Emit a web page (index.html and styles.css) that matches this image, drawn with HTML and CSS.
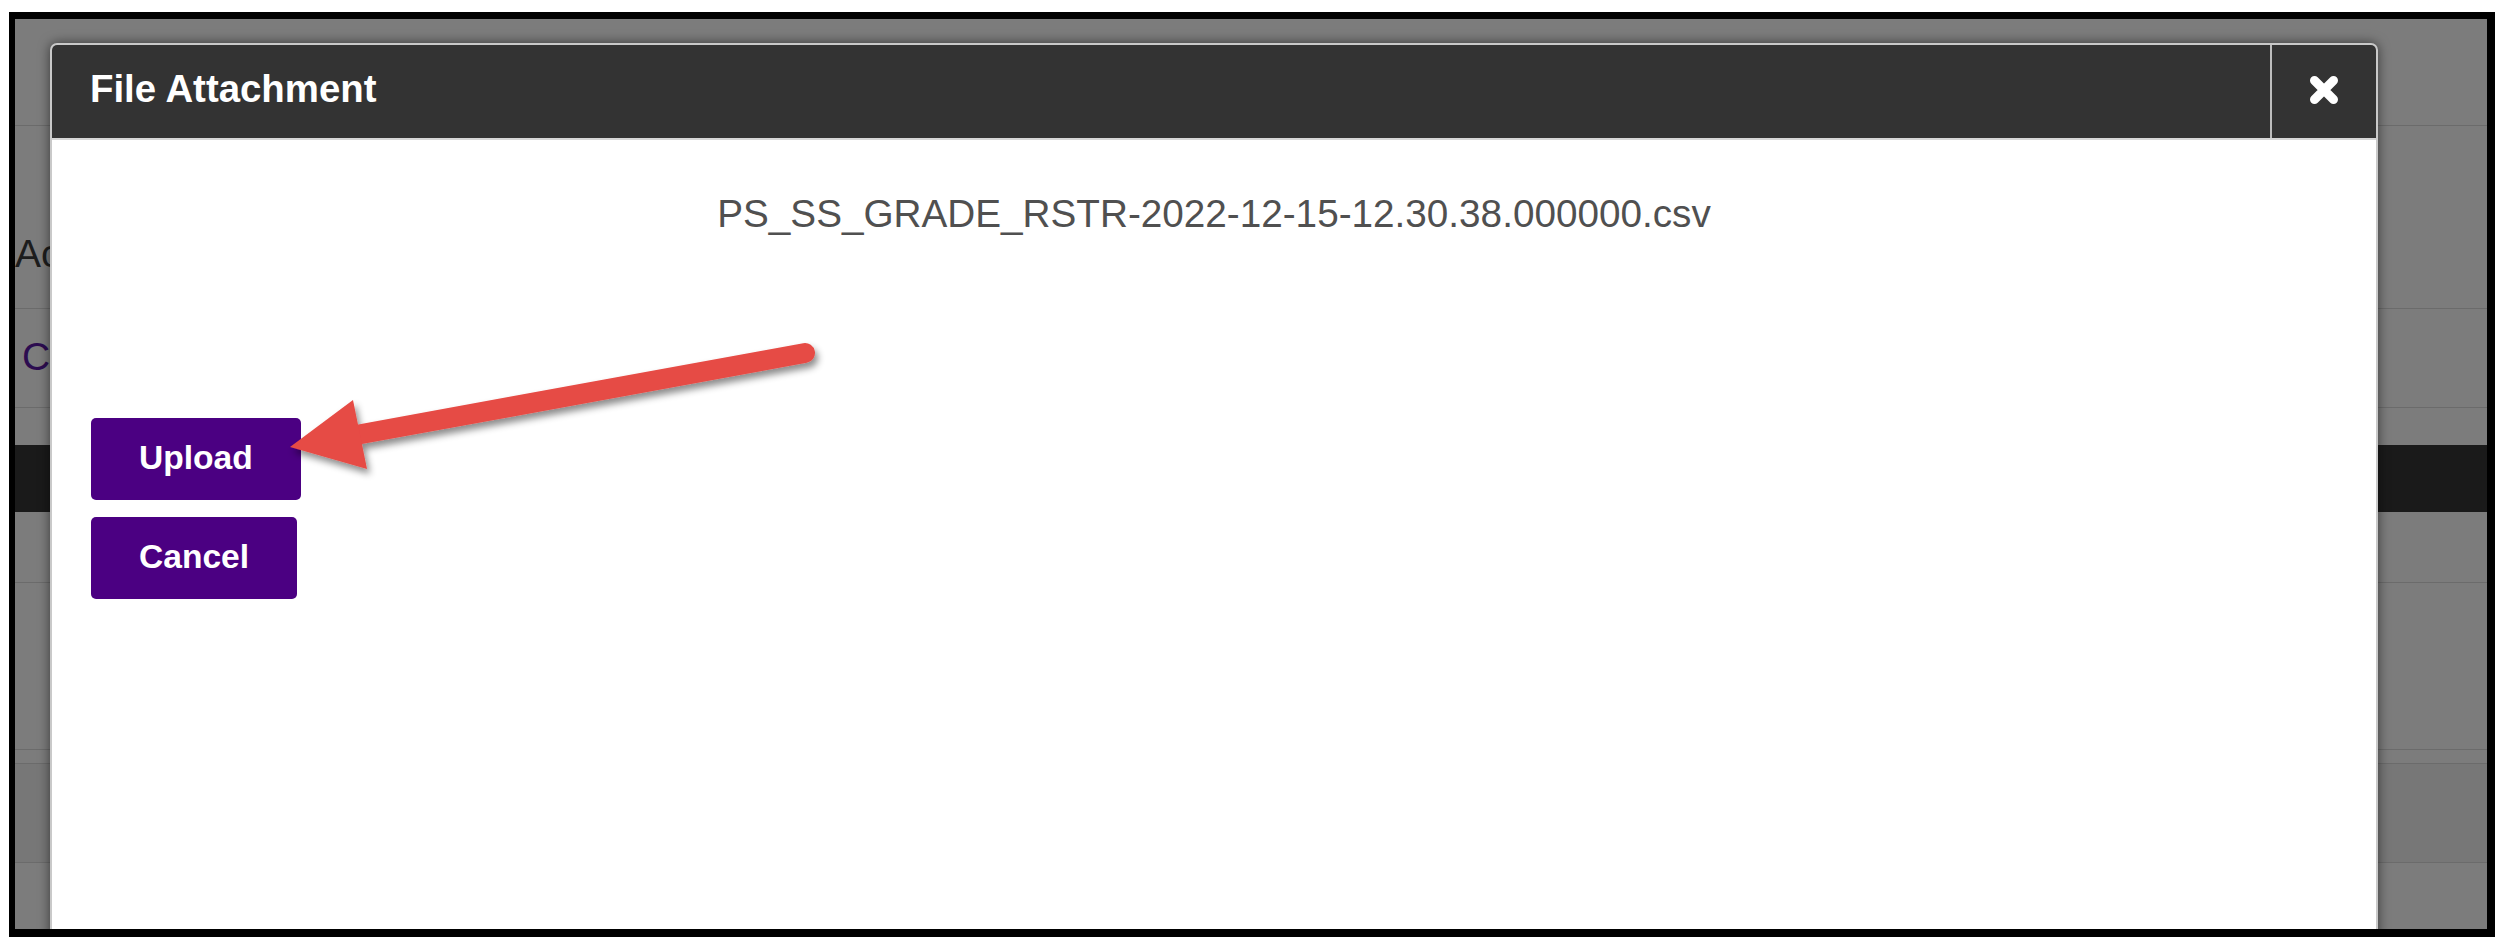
FILE: index.html
```html
<!DOCTYPE html>
<html lang="en">
<head>
<meta charset="utf-8">
<title>File Attachment</title>
<link rel="stylesheet" href="styles.css">
</head>
<body>
  <div class="frame">
    <div class="page">
      <div class="row r1"></div>
      <div class="row r2"><span class="bg-text">Ac</span></div>
      <div class="row r3"><span class="bg-link">C</span></div>
      <div class="row r4"></div>
      <div class="band"></div>
      <div class="row r5"></div>
      <div class="row r6"></div>
      <div class="row r7"></div>
      <div class="row r8"></div>
      <div class="row-fill"></div>
    </div>

    <div class="modal">
      <div class="modal-header">
        <div class="modal-title">File Attachment</div>
        <div class="modal-close">
          <svg class="close-icon" viewBox="0 0 32 32" width="32" height="32" aria-hidden="true">
            <path d="M6.5 6.5 L25.5 25.5 M25.5 6.5 L6.5 25.5" fill="none" stroke="#ffffff" stroke-width="9" stroke-linecap="round"/>
          </svg>
        </div>
      </div>
      <div class="modal-body">
        <div class="file-name">PS_SS_GRADE_RSTR-2022-12-15-12.30.38.000000.csv</div>
        <div class="actions">
          <div class="btn">Upload</div>
          <div class="btn btn-cancel">Cancel</div>
        </div>
      </div>
    </div>
  </div>

  <svg class="arrow" viewBox="0 0 2508 952" width="2508" height="952" aria-hidden="true">
    <defs>
      <filter id="shadow" x="-20%" y="-50%" width="140%" height="200%">
        <feDropShadow dx="3" dy="5" stdDeviation="3.5" flood-color="#000" flood-opacity="0.45"/>
      </filter>
    </defs>
    <g filter="url(#shadow)" fill="#e64b45">
      <line x1="805" y1="353" x2="356" y2="435" stroke="#e64b45" stroke-width="20" stroke-linecap="round"/>
      <polygon points="290,447 353,400 367,469"/>
    </g>
  </svg>
</body>
</html>
```

FILE: styles.css
```css
html, body {
  margin: 0;
  padding: 0;
  background: #ffffff;
}

body {
  position: relative;
  width: 2508px;
  height: 952px;
  overflow: hidden;
  font-family: "Liberation Sans", Arial, sans-serif;
}

.frame {
  position: relative;
  box-sizing: border-box;
  margin: 12px 0 0 9px;
  width: 2486px;
  height: 925px;
  border-style: solid;
  border-color: #000000;
  border-width: 7px 8px 8px 6px;
  background: #7c7c7c;
  overflow: hidden;
}

.page {
  display: flex;
  flex-direction: column;
  height: 100%;
}

.row {
  box-sizing: border-box;
  border-bottom: 1px solid #6b6b6b;
  flex: none;
}

.r1 { height: 107px; }
.r2 { height: 183px; padding-top: 106px; }
.r3 { height: 99px; padding-top: 26px; padding-left: 7px; }
.r4 { height: 37px; border-bottom: none; }
.band { height: 67px; background: #1a1a1a; flex: none; }
.r5 { height: 71px; }
.r6 { height: 167px; }
.r7 { height: 14px; }
.r8 { height: 99px; background: #777777; }
.row-fill { flex: 1; }

.bg-text,
.bg-link {
  display: block;
  font-size: 39px;
  line-height: 44px;
  white-space: nowrap;
}

.bg-text { color: #1d1d1d; }
.bg-link { color: #2c0c50; }

.modal {
  position: absolute;
  left: 35px;
  top: 24px;
  width: 2328px;
  height: 1000px;
  box-sizing: border-box;
  background: #ffffff;
  border: 2px solid #c9c9c9;
  border-radius: 7px 7px 0 0;
  box-shadow: 0 0 12px rgba(0, 0, 0, 0.55);
  display: flex;
  flex-direction: column;
}

.modal-header {
  display: flex;
  height: 95px;
  box-sizing: border-box;
  background: #333333;
  border-bottom: 2px solid #d6d6d6;
  border-radius: 5px 5px 0 0;
}

.modal-title {
  flex: 1;
  display: flex;
  align-items: center;
  padding: 0 0 6px 38px;
  color: #ffffff;
  font-size: 38.4px;
  font-weight: bold;
}

.modal-close {
  width: 106px;
  flex: none;
  border-left: 2px solid #bdbdbd;
  display: flex;
  align-items: center;
  justify-content: center;
  padding-bottom: 4px;
  box-sizing: border-box;
}

.close-icon {
  display: block;
}

.modal-body {
  display: flex;
  flex-direction: column;
}

.file-name {
  margin-top: 52px;
  text-align: center;
  color: #505050;
  font-size: 38.7px;
  line-height: 44px;
}

.actions {
  display: flex;
  flex-direction: column;
  align-items: flex-start;
  gap: 17px;
  margin-top: 182px;
  padding-left: 39px;
}

.btn {
  display: flex;
  align-items: center;
  height: 82px;
  box-sizing: border-box;
  padding: 0 48px 2px;
  background: #4b0082;
  color: #ffffff;
  font-size: 33.6px;
  font-weight: bold;
  border-radius: 5px;
}

.arrow {
  position: absolute;
  left: 0;
  top: 0;
  overflow: visible;
  pointer-events: none;
}
```
